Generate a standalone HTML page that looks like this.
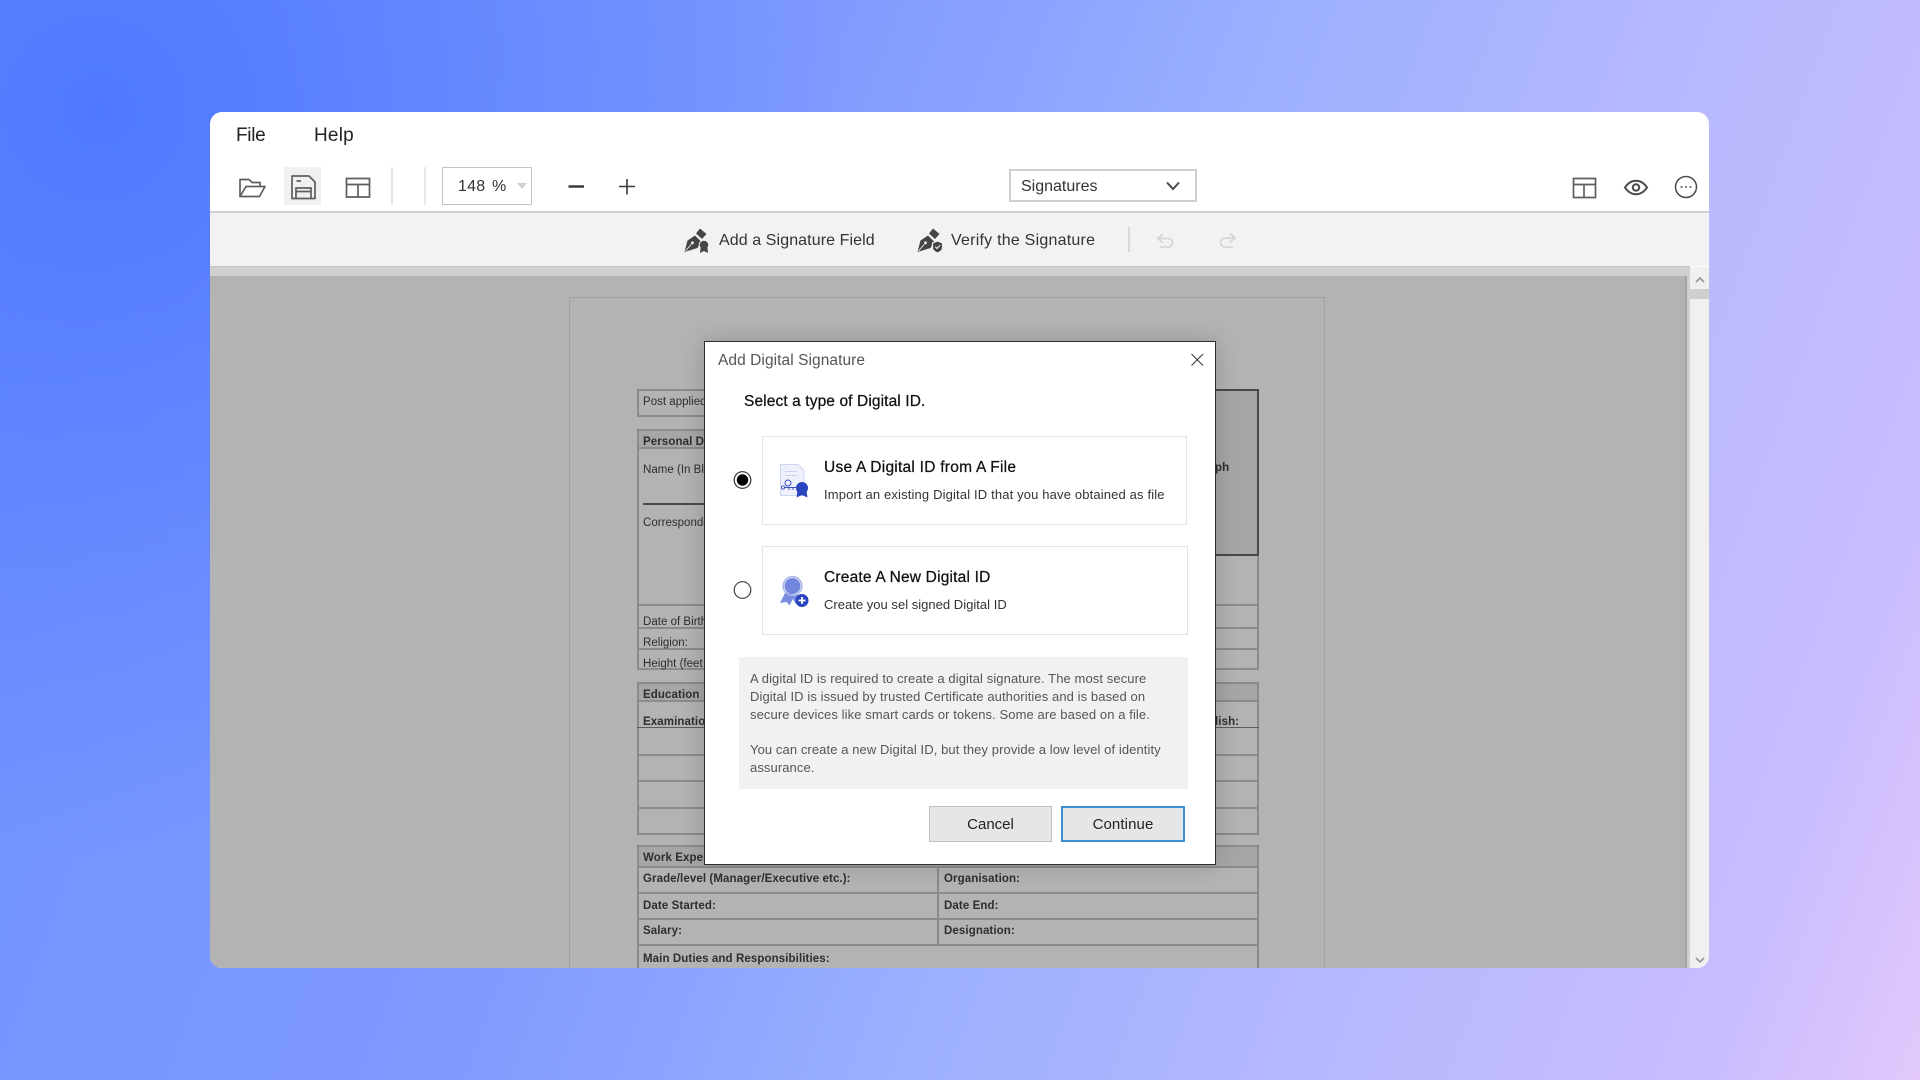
<!DOCTYPE html>
<html lang="en"><head><meta charset="utf-8"><title>Add Digital Signature</title>
<style>
*{box-sizing:border-box;margin:0;padding:0}
html,body{width:1920px;height:1080px;overflow:hidden}
body{position:relative;font-family:"Liberation Sans",sans-serif;background:radial-gradient(circle 750px at 100px 110px,#4e78ff 0%,rgba(78,120,255,.6) 35%,rgba(78,120,255,0) 100%),linear-gradient(110deg,#6d90ff 0%,#7f9aff 36%,#9cb0ff 56%,#b8b9ff 75%,#c7bcff 90%,#e2c8fb 100%)}
.a,.t{position:absolute}
.t{white-space:nowrap;line-height:1}
#win{position:absolute;left:210px;top:112px;width:1499px;height:856px;border-radius:12px;overflow:hidden;background:#fff}
#page{position:absolute;left:0;top:0;width:1920px;height:1080px;overflow:hidden}
.d{font-size:11.5px;color:#2e2e2e;letter-spacing:.02px}
.b{font-weight:bold;letter-spacing:.1px}
.box{position:absolute;border:2px solid #8b8b8b}
.ln{position:absolute;background:#8b8b8b}
svg{position:absolute;left:0;top:0}
</style></head><body>
<div id="win"><div id="page" style="left:-210px;top:-112px">
<!-- toolbar -->
<div class="a" style="left:210px;top:211px;width:1499px;height:2px;background:#cfcfcf"></div>
<div class="a" style="left:210px;top:213px;width:1499px;height:53px;background:#f1f2f4"></div>
<div class="a" style="left:210px;top:266px;width:1480px;height:1px;background:#c4c4c4"></div>
<div class="a" style="left:210px;top:267px;width:1480px;height:9px;background:#d0d0d0"></div>
<div class="a" style="left:210px;top:276px;width:1475px;height:692px;background:#b3b3b3"></div>
<div class="a" style="left:1685px;top:276px;width:2px;height:692px;background:#a2a2a2"></div>
<div class="a" style="left:1687px;top:276px;width:3px;height:692px;background:#d0d0d0"></div>
<div class="a" style="left:1690px;top:267px;width:19px;height:701px;background:#f0f0f0"></div>
<div class="a" style="left:1690px;top:289px;width:19px;height:10px;background:#cfcfcf"></div>
<div class="a" style="left:284px;top:167px;width:37px;height:38px;background:#f1f1f1"></div>
<div class="a" style="left:391px;top:167px;width:2px;height:38px;background:#e8e8e8"></div>
<div class="a" style="left:424px;top:167px;width:2px;height:38px;background:#e8e8e8"></div>
<div class="a" style="left:442px;top:167px;width:90px;height:38px;border:1px solid #c4c4c4"></div>
<div class="a" style="left:1009px;top:169px;width:188px;height:33px;border:2px solid #cfcfcf"></div>
<div class="a" style="left:1128px;top:227px;width:2px;height:25px;background:#d8d8d8"></div>

<div class="t" style="left:236px;top:126px;font-size:19px;color:#222;letter-spacing:-.3px">File</div>
<div class="t" style="left:314px;top:126px;font-size:19px;color:#222;letter-spacing:.2px">Help</div>
<div class="t" style="left:458px;top:179px;font-size:16px;color:#333;letter-spacing:.2px;word-spacing:2px">148 %</div>
<div class="t" style="left:1021px;top:179px;font-size:16px;color:#333;letter-spacing:0">Signatures</div>
<div class="t" style="left:719px;top:233px;font-size:16px;color:#333;letter-spacing:.09px">Add a Signature Field</div>
<div class="t" style="left:951px;top:233px;font-size:16px;color:#333;letter-spacing:.23px">Verify the Signature</div>

<!-- document -->
<div class="a" style="left:569px;top:297px;width:756px;height:680px;border:1px solid #a2a2a2"></div>
<div class="box" style="left:637px;top:389px;width:200px;height:28px"></div>
<div class="box" style="left:637px;top:429px;width:622px;height:241px"></div>
<div class="a" style="left:639px;top:431px;width:618px;height:17px;background:#a6a6a6"></div>
<div class="ln" style="left:637px;top:447px;width:622px;height:2px"></div>
<div class="a" style="left:643px;top:503px;width:200px;height:2px;background:#4a4a4a"></div>
<div class="ln" style="left:637px;top:604px;width:622px;height:2px"></div>
<div class="ln" style="left:637px;top:627px;width:622px;height:2px"></div>
<div class="ln" style="left:637px;top:648px;width:622px;height:2px"></div>
<div class="a" style="left:1100px;top:389px;width:159px;height:167px;background:#a6a6a6;border:2px solid #484848"></div>
<div class="t d" style="left:643px;top:397px">Post applied</div>
<div class="t d b" style="left:643px;top:437px">Personal Details</div>
<div class="t d" style="left:643px;top:465px">Name (In Block</div>
<div class="t d" style="left:643px;top:518px">Correspondence</div>
<div class="t d" style="left:643px;top:617px">Date of Birth</div>
<div class="t d" style="left:643px;top:638px">Religion:</div>
<div class="t d" style="left:643px;top:659px">Height (feet</div>
<div class="t d b" style="left:1215px;top:463px">ph</div>

<div class="box" style="left:637px;top:682px;width:622px;height:153px"></div>
<div class="a" style="left:639px;top:684px;width:618px;height:16px;background:#a6a6a6"></div>
<div class="ln" style="left:637px;top:700px;width:622px;height:2px"></div>
<div class="a" style="left:637px;top:727px;width:622px;height:1px;background:#5c5c5c"></div>
<div class="ln" style="left:637px;top:754px;width:622px;height:2px"></div>
<div class="ln" style="left:637px;top:780px;width:622px;height:2px"></div>
<div class="ln" style="left:637px;top:807px;width:622px;height:2px"></div>
<div class="t d b" style="left:643px;top:690px">Education</div>
<div class="t d b" style="left:643px;top:717px">Examination</div>
<div class="t d b" style="left:1215px;top:717px">lish:</div>

<div class="box" style="left:637px;top:845px;width:622px;height:140px"></div>
<div class="a" style="left:639px;top:847px;width:618px;height:19px;background:#a6a6a6"></div>
<div class="ln" style="left:637px;top:866px;width:622px;height:2px"></div>
<div class="ln" style="left:637px;top:892px;width:622px;height:2px"></div>
<div class="ln" style="left:637px;top:918px;width:622px;height:2px"></div>
<div class="ln" style="left:637px;top:944px;width:622px;height:2px"></div>
<div class="ln" style="left:937px;top:866px;width:2px;height:78px"></div>
<div class="t d b" style="left:643px;top:853px">Work Experience</div>
<div class="t d b" style="left:643px;top:874px">Grade/level (Manager/Executive etc.):</div>
<div class="t d b" style="left:944px;top:874px">Organisation:</div>
<div class="t d b" style="left:643px;top:901px">Date Started:</div>
<div class="t d b" style="left:944px;top:901px">Date End:</div>
<div class="t d b" style="left:643px;top:926px">Salary:</div>
<div class="t d b" style="left:944px;top:926px">Designation:</div>
<div class="t d b" style="left:643px;top:954px">Main Duties and Responsibilities:</div>

<!-- toolbar icons -->
<svg width="1920" height="1080" viewBox="0 0 1920 1080" fill="none">
<g stroke="#5f5f5f" stroke-width="1.700">
<path d="M240 196.500V179.500H249L252 182.500H260V186.500M240 196.500H259.500L265 186.500H246L240 196.500Z" stroke-linejoin="round"/>
<path d="M292 176H309L315 182V198.500H292Z" stroke-linejoin="round"/>
<path d="M296 198V188H311V198M296 191.500H311M296.500 181H301"/>
<path d="M346.500 178.500H369.500V197H346.500ZM346.500 184.500H369.500M358 184.500V197" stroke-width="1.700"/>
<path d="M1573.500 178.500H1595.500V197.500H1573.500ZM1573.500 184.500H1595.500M1584 184.500V197.500" stroke-width="1.700"/>
<path d="M1625 187.500C1631 178.500 1641 178.500 1647 187.500C1641 196.500 1631 196.500 1625 187.500Z" stroke="#4a4a4a" stroke-width="2"/>
<circle cx="1636" cy="187.500" r="3.200" stroke="#4a4a4a" stroke-width="2"/>
<circle cx="1686" cy="187" r="10.500" stroke="#4a4a4a" stroke-width="1.500"/>
</g>
<circle cx="1681.500" cy="187" r="1" fill="#555"/><circle cx="1686" cy="187" r="1" fill="#555"/><circle cx="1690.500" cy="187" r="1" fill="#555"/>
<path d="M517 183H527L522 189Z" fill="#cfcfcf"/>
<path d="M568.500 186.500H584" stroke="#3a3a3a" stroke-width="2.500"/>
<path d="M619 186.500H635M627 179V194.500" stroke="#3a3a3a" stroke-width="1.600"/>
<path d="M1167 182.500L1173 189L1179 182.500" stroke="#4a4a4a" stroke-width="2"/>
<!-- add signature icon -->
<g fill="#454545">
<path d="M684.500 252L687.500 240.500L695 235.500L701 241.500L697.500 248Z"/>
<path d="M696 233.500L700 228.500L706.500 234L702 239Z"/>
<path d="M917.500 252L920.500 240.500L928 235.500L934 241.500L930.500 248Z"/>
<path d="M929 233.500L933 228.500L939.500 234L935 239Z"/>
<g stroke="#f1f2f4" stroke-width="1"><circle cx="704" cy="245" r="4.800"/></g>
<path d="M700.500 248L700 253L704 251L708 253L707.500 248Z"/>
<path d="M932.500 243L937.500 241L942.500 243V248C942.500 250.500 940 252 937.500 253C935 252 932.500 250.500 932.500 248Z" stroke="#f1f2f4" stroke-width="1.200"/>
</g>
<path d="M685.500 251L691.500 244" stroke="#f1f2f4" stroke-width=".9"/><path d="M918.500 251L924.500 244" stroke="#f1f2f4" stroke-width=".9"/>
<circle cx="692.500" cy="242.800" r="1.400" fill="#f1f2f4"/><circle cx="925.500" cy="242.800" r="1.400" fill="#f1f2f4"/>
<path d="M935.300 246.800L937 248.500L940 245.300" stroke="#f1f2f4" stroke-width="1.100"/>
<!-- undo redo -->
<path d="M1163 234L1158 238.500L1163 243M1158 238.500H1168C1174 238.500 1174 247 1168 247H1160" stroke="#d2d2d2" stroke-width="1.600"/>
<path d="M1230 233.500L1235 238L1230 242.500M1235 238H1225C1219 238 1219 247 1225 247H1233" stroke="#d2d2d2" stroke-width="1.600"/>
<!-- scrollbar arrows -->
<path d="M1696 282L1700 278L1704 282" stroke="#9a9a9a" stroke-width="1.800"/>
<path d="M1696 958L1700 962L1704 958" stroke="#9a9a9a" stroke-width="1.800"/>
</svg>
</div></div>

<!-- dialog -->
<div class="a" style="left:704px;top:341px;width:512px;height:524px;background:#fff;border:1px solid #2e2e2e;box-shadow:0 0 22px rgba(0,0,0,.18)"></div>
<div class="t" style="left:718px;top:353px;font-size:15.500px;color:#555;letter-spacing:.07px">Add Digital Signature</div>
<div class="t" style="left:744px;top:394px;font-size:15.500px;color:#111;letter-spacing:.11px;-webkit-text-stroke:.25px #111">Select a type of Digital ID.</div>
<div class="a" style="left:762px;top:436px;width:425px;height:89px;border:1px solid #e3e3e3"></div>
<div class="a" style="left:762px;top:546px;width:426px;height:89px;border:1px solid #e3e3e3"></div>
<div class="t" style="left:824px;top:460px;font-size:15.500px;color:#111;letter-spacing:.25px;-webkit-text-stroke:.25px #111">Use A Digital ID from A File</div>
<div class="t" style="left:824px;top:488px;font-size:13px;color:#333;letter-spacing:.15px">Import an existing Digital ID that you have obtained as file</div>
<div class="t" style="left:824px;top:570px;font-size:15.500px;color:#111;letter-spacing:.2px;-webkit-text-stroke:.25px #111">Create A New Digital ID</div>
<div class="t" style="left:824px;top:598px;font-size:13px;color:#333;letter-spacing:.02px">Create you sel signed Digital ID</div>
<div class="a" style="left:739px;top:657px;width:449px;height:132px;background:#f1f1f1"></div>
<div class="t" style="left:750px;top:672px;font-size:13px;color:#555;letter-spacing:.09px">A digital ID is required to create a digital signature. The most secure</div>
<div class="t" style="left:750px;top:690px;font-size:13px;color:#555;letter-spacing:.09px">Digital ID is issued by trusted Certificate authorities and is based on</div>
<div class="t" style="left:750px;top:708px;font-size:13px;color:#555;letter-spacing:.09px">secure devices like smart cards or tokens. Some are based on a file.</div>
<div class="t" style="left:750px;top:743px;font-size:13px;color:#555;letter-spacing:.09px">You can create a new Digital ID, but they provide a low level of identity</div>
<div class="t" style="left:750px;top:761px;font-size:13px;color:#555;letter-spacing:.09px">assurance.</div>
<div class="a" style="left:929px;top:806px;width:123px;height:36px;background:#e5e6e6;border:1px solid #bfbfbf;font-size:15px;line-height:36px;text-align:center;color:#222">Cancel</div>
<div class="a" style="left:1061px;top:806px;width:124px;height:36px;background:#e5e6e6;border:2px solid #3d8fd4;font-size:15px;letter-spacing:.1px;line-height:34px;text-align:center;color:#222">Continue</div>

<svg width="1920" height="1080" viewBox="0 0 1920 1080" fill="none">
<path d="M1191.500 354L1203 365.500M1203 354L1191.500 365.500" stroke="#444" stroke-width="1.200"/>
<circle cx="742.500" cy="480" r="8.300" stroke="#333" stroke-width="1.200"/><circle cx="742.500" cy="480" r="5.700" fill="#000"/>
<circle cx="742.500" cy="590" r="8.300" stroke="#444" stroke-width="1.200"/>
<!-- file icon -->
<path d="M780.500 464.500H798L804 470.500V495.500H780.500Z" fill="#eef1fc" stroke="#cdd7f4"/>
<path d="M785 471.500H797M785 475.500H797" stroke="#c8d2f0"/>
<circle cx="788" cy="483" r="3" stroke="#3a51c4" stroke-width="1"/>
<circle cx="783" cy="487.500" r="1.600" stroke="#3a51c4" stroke-width=".9"/>
<path d="M784.500 487.500H800M789 490V487.500M793 490V487.500" stroke="#3a51c4" stroke-width="1"/>
<circle cx="802" cy="488" r="6" fill="#2b45bf"/>
<path d="M797.500 491L796.500 497.500L802 495L807.500 497.500L806.500 491Z" fill="#2b45bf"/>
<!-- medal icon -->
<path d="M785.500 592L780 603L786.500 602L789.500 605.500L795 595Z" fill="#7a8de0"/>
<path d="M798 594L803 604L796 604L791 596Z" fill="#7a8de0"/>
<circle cx="792.500" cy="586" r="8" fill="#7186dc"/>
<circle cx="792.500" cy="586" r="9.300" stroke="#a9b6ea" stroke-width="1.600"/>
<circle cx="802" cy="600.500" r="6.500" fill="#2b45bf"/>
<path d="M798.500 600.500H805.500M802 597V604" stroke="#fff" stroke-width="1.800"/>
</svg>
</body></html>
